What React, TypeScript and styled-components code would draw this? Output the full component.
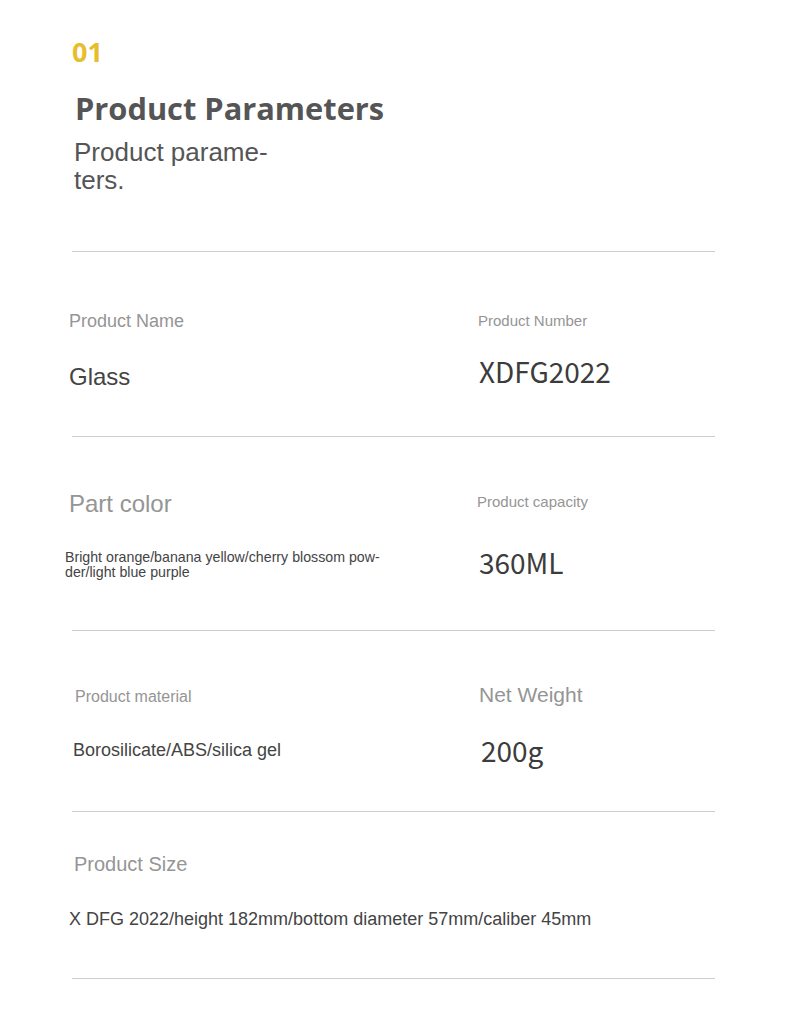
import styled, { createGlobalStyle } from "styled-components";

interface Spec {
  label: string;
  labelSize: number;
  labelDx: number;
  value: React.ReactNode;
  valueSize: number;
  valueDx: number;
  num?: boolean;
  pt: number;
  gap: number;
  wide?: boolean;
}

interface RowSpec {
  h: number;
  cells: Spec[];
}

const rows: RowSpec[] = [
  {
    h: 184,
    cells: [
      { label: "Product Name", labelSize: 18, labelDx: -3, value: "Glass", valueSize: 24, valueDx: -3, pt: 59, gap: 31 },
      { label: "Product Number", labelSize: 15, labelDx: 0, value: "XDFG2022", valueSize: 28, valueDx: 1, num: true, pt: 60, gap: 25 },
    ],
  },
  {
    h: 193,
    cells: [
      { label: "Part color", labelSize: 24, labelDx: -3, valueSize: 14.2, valueDx: -7, pt: 53, gap: 31,
        value: (
          <>
            Bright orange/banana yellow/cherry blossom pow-
            <br />
            der/light blue purple
          </>
        ) },
      { label: "Product capacity", labelSize: 15, labelDx: -1, value: "360ML", valueSize: 28, valueDx: 1, num: true, pt: 56, gap: 35 },
    ],
  },
  {
    h: 180,
    cells: [
      { label: "Product material", labelSize: 16, labelDx: 3, value: "Borosilicate/ABS/silica gel", valueSize: 18, valueDx: 1, pt: 56, gap: 34 },
      { label: "Net Weight", labelSize: 21, labelDx: 1, value: "200g", valueSize: 28, valueDx: 3, num: true, pt: 51, gap: 27 },
    ],
  },
  {
    h: 166,
    cells: [
      { label: "Product Size", labelSize: 20, labelDx: 2, value: "X DFG 2022/height 182mm/bottom diameter 57mm/caliber 45mm", valueSize: 18, valueDx: -3, pt: 40, gap: 33, wide: true },
    ],
  },
];

export default function App() {
  return (
    <>
      <GlobalStyle />
      <Page>
        <Header>
          <Index>01</Index>
          <Title>Product Parameters</Title>
          <Subtitle>
            Product parame-
            <br />
            ters.
          </Subtitle>
        </Header>
        {rows.map((row, i) => (
          <Row key={i} $h={row.h}>
            {row.cells.map((c) => (
              <Cell key={c.label} $pt={c.pt} $gap={c.gap} $wide={c.wide}>
                <Label $size={c.labelSize} $dx={c.labelDx}>
                  {c.label}
                </Label>
                <Value $size={c.valueSize} $dx={c.valueDx} $num={c.num}>
                  {c.value}
                </Value>
              </Cell>
            ))}
          </Row>
        ))}
      </Page>
    </>
  );
}

const GlobalStyle = createGlobalStyle`
  body {
    margin: 0;
    background: #fff;
    font-family: "Liberation Sans", Arial, sans-serif;
  }
`;

const Page = styled.div`
  width: 790px;
  box-sizing: border-box;
  padding: 38px 75px 0 72px;
`;

const Header = styled.header`
  display: flex;
  flex-direction: column;
  align-items: flex-start;
  padding-bottom: 57px;
  border-bottom: 1px solid #cdcdcd;
`;

const Index = styled.div`
  font-family: "Open Sans", "Noto Sans", sans-serif;
  font-weight: 700;
  font-size: 27px;
  line-height: 1;
  color: #e8bd2c;
`;

const Title = styled.h1`
  margin: 28px 0 0 3px;
  font-family: "Open Sans", "Noto Sans", sans-serif;
  font-weight: 700;
  font-size: 30.8px;
  line-height: 1;
  color: #555;
`;

const Subtitle = styled.p`
  margin: 14px 0 0 2px;
  font-size: 26px;
  line-height: 28px;
  color: #555;
`;

const Row = styled.section<{ $h: number }>`
  display: grid;
  grid-template-columns: 406px 1fr;
  height: ${(p) => p.$h}px;
  border-bottom: 1px solid #cdcdcd;
`;

const Cell = styled.div<{ $pt: number; $gap: number; $wide?: boolean }>`
  display: flex;
  flex-direction: column;
  align-items: flex-start;
  gap: ${(p) => p.$gap}px;
  padding-top: ${(p) => p.$pt}px;
  grid-column: ${(p) => (p.$wide ? "1 / -1" : "auto")};
`;

const Label = styled.div<{ $size: number; $dx: number }>`
  margin-left: ${(p) => p.$dx}px;
  font-size: ${(p) => p.$size}px;
  line-height: 1.2;
  color: #959595;
`;

const Value = styled.div<{ $size: number; $dx: number; $num?: boolean }>`
  margin-left: ${(p) => p.$dx}px;
  font-family: ${(p) =>
    p.$num ? `"Noto Sans CJK SC", "Noto Sans", sans-serif` : `"Liberation Sans", Arial, sans-serif`};
  font-size: ${(p) => p.$size}px;
  line-height: ${(p) => (p.$size < 16 ? "15px" : "1.2")};
  color: ${(p) => (p.$num ? "#3c3c3c" : "#444")};
  white-space: nowrap;
`;
